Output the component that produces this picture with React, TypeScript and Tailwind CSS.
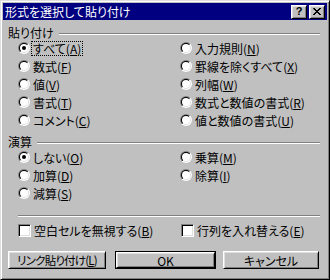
import React from "react";

// Win98-style "Paste Special" dialog (Japanese)

const raised =
  "border border-t-white border-l-white border-r-black border-b-black shadow-[inset_1px_1px_0_#dfdfdf,inset_-1px_-1px_0_#808080] bg-[#c0c0c0]";

const Radio = ({ checked }: { checked?: boolean }) => (
  <svg width="12" height="12" viewBox="0 0 12 12" className="shrink-0">
    <defs>
      <linearGradient id="ro" x1="0" y1="0" x2="1" y2="1">
        <stop offset="0.5" stopColor="#808080" />
        <stop offset="0.5" stopColor="#ffffff" />
      </linearGradient>
      <linearGradient id="ri" x1="0" y1="0" x2="1" y2="1">
        <stop offset="0.5" stopColor="#000000" />
        <stop offset="0.5" stopColor="#dfdfdf" />
      </linearGradient>
    </defs>
    <circle cx="6" cy="6" r="6" fill="url(#ro)" />
    <circle cx="6" cy="6" r="5" fill="url(#ri)" />
    <circle cx="6" cy="6" r="4" fill="#fff" />
    {checked && <circle cx="6" cy="6" r="2" fill="#000" />}
  </svg>
);

const Label = ({ text, k, focus }: { text: string; k: string; focus?: boolean }) => (
  <span
    className={`border px-[1px] leading-[13px] ${
      focus ? "border-dotted border-black" : "border-transparent"
    }`}
  >
    {text}(<span className="underline underline-offset-1">{k}</span>)
  </span>
);

const RadioRow = ({
  text,
  k,
  checked,
  focus,
}: {
  text: string;
  k: string;
  checked?: boolean;
  focus?: boolean;
}) => (
  <div className="flex items-center gap-[1px] h-[18px]">
    <Radio checked={checked} />
    <Label text={text} k={k} focus={focus} />
  </div>
);

const Etched = () => (
  <div className="h-[2px] border-t border-t-[#808080] border-b border-b-white" />
);

const Header = ({ title }: { title: string }) => (
  <div className="flex items-start h-[12px]">
    <span className="leading-[12px]">{title}</span>
    <div className="flex-1 ml-[5px] mt-[6px]">
      <Etched />
    </div>
  </div>
);

const Checkbox = ({ text, k }: { text: string; k: string }) => (
  <div className="flex items-center gap-[3px] h-[15px]">
    <div className="w-[13px] h-[13px] bg-white border border-t-[#808080] border-l-[#808080] border-r-white border-b-white shadow-[inset_1px_1px_0_#000,inset_-1px_-1px_0_#dfdfdf]" />
    <span className="leading-[13px]">
      {text}(<span className="underline underline-offset-1">{k}</span>)
    </span>
  </div>
);

export default function App() {
  return (
    <div className="w-[330px] h-[280px] bg-[#c0c0c0] border border-t-[#dfdfdf] border-l-[#dfdfdf] border-r-black border-b-black shadow-[inset_1px_1px_0_#fff,inset_-1px_-1px_0_#808080] p-[2px] font-['Noto_Sans_CJK_JP',sans-serif] text-[12px] text-black [font-feature-settings:'palt']">
      {/* Title bar */}
      <div className="h-[17px] bg-[#000080] flex items-center pl-[2px] pr-[2px]">
        <span className="text-white leading-[14px] flex-1">形式を選択して貼り付け</span>
        <div className={`w-[16px] h-[14px] ${raised} flex items-center justify-center`}>
          <span className="font-bold text-[11px] leading-[11px] font-['Liberation_Sans',sans-serif]">?</span>
        </div>
        <div className={`w-[16px] h-[14px] ml-[2px] ${raised} flex items-center justify-center`}>
          <svg width="8" height="7" viewBox="0 0 8 7">
            <path d="M0 0h2v1h1v1h2v-1h1v-1h2v1h-1v1h-1v1h-1v1h1v1h1v1h1v1h-2v-1h-1v-1h-2v1h-1v1h-2v-1h1v-1h1v-1h1v-1h-1v-1h-1z" fill="#000" />
          </svg>
        </div>
      </div>

      <div className="flex flex-col pl-[5px] pr-[7px]">
        {/* Paste */}
        <div className="mt-[7px]">
          <Header title="貼り付け" />
        </div>
        <div className="grid grid-cols-[162px_1fr] ml-[10px]">
          <div className="flex flex-col">
            <RadioRow text="すべて" k="A" checked focus />
            <RadioRow text="数式" k="F" />
            <RadioRow text="値" k="V" />
            <RadioRow text="書式" k="T" />
            <RadioRow text="コメント" k="C" />
          </div>
          <div className="flex flex-col">
            <RadioRow text="入力規則" k="N" />
            <RadioRow text="罫線を除くすべて" k="X" />
            <RadioRow text="列幅" k="W" />
            <RadioRow text="数式と数値の書式" k="R" />
            <RadioRow text="値と数値の書式" k="U" />
          </div>
        </div>

        {/* Operation */}
        <div className="mt-[7px]">
          <Header title="演算" />
        </div>
        <div className="grid grid-cols-[162px_1fr] ml-[10px]">
          <div className="flex flex-col">
            <RadioRow text="しない" k="O" checked />
            <RadioRow text="加算" k="D" />
            <RadioRow text="減算" k="S" />
          </div>
          <div className="flex flex-col">
            <RadioRow text="乗算" k="M" />
            <RadioRow text="除算" k="I" />
          </div>
        </div>

        <div className="ml-[10px] mt-[13px]">
          <Etched />
        </div>

        <div className="grid grid-cols-[163px_1fr] ml-[10px] mt-[6px]">
          <Checkbox text="空白セルを無視する" k="B" />
          <Checkbox text="行列を入れ替える" k="E" />
        </div>

        {/* Buttons */}
        <div className="flex mt-[13px]">
          <div className={`w-[98px] h-[18px] ${raised} flex items-center justify-center`}>
            <span className="leading-[13px] text-[11.5px] tracking-[-0.8px]">
              リンク貼り付け(<span className="underline underline-offset-1">L</span>)
            </span>
          </div>
          <div className="w-[101px] h-[18px] ml-[9px] border border-black flex">
            <div className={`flex-1 ${raised} flex items-center justify-center`}>
              <span className="leading-[13px]">OK</span>
            </div>
          </div>
          <div className={`w-[96px] h-[18px] ml-[7px] ${raised} flex items-center justify-center`}>
            <span className="leading-[13px]">キャンセル</span>
          </div>
        </div>
      </div>
    </div>
  );
}
